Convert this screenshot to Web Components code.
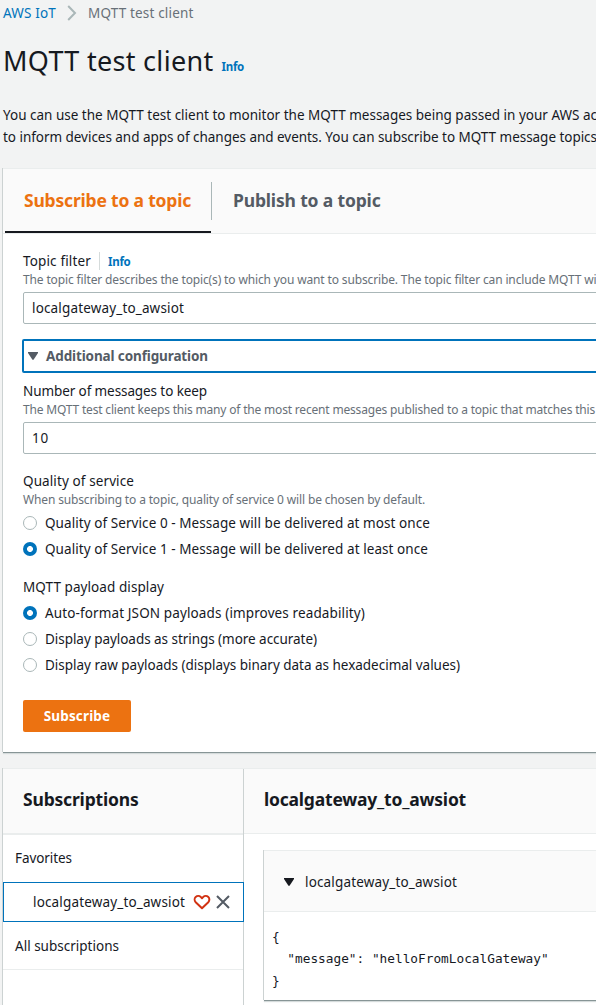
<!DOCTYPE html>
<html lang="en">
<head>
<meta charset="utf-8">
<title>MQTT test client</title>
<style>
html,body{margin:0;height:100%;overflow:hidden;background:#f2f3f3}
body{font:13.5px/22px "Noto Sans","Open Sans",sans-serif;color:#16191f}
</style>
</head>
<body>
<mqtt-page></mqtt-page>
<script>
// Defines an element whose shadow root is cloned from a template.
function define(name, html, setup) {
  const tpl = document.createElement('template');
  tpl.innerHTML = html;
  customElements.define(name, class extends HTMLElement {
    connectedCallback() {
      if (this.shadowRoot) return;
      this.attachShadow({mode: 'open'}).appendChild(tpl.content.cloneNode(true));
      if (setup) setup.call(this, this.shadowRoot);
    }
  });
}

// A single line of text tracked to a given measure: w = width in px.
define('ui-text', `<style>:host{display:block;white-space:pre;flex:none}span{display:inline-block}</style><span><slot></slot></span>`,
function (root) {
  const s = root.querySelector('span');
  const w = parseFloat(this.getAttribute('w'));
  if (!w) return;
  const n = this.textContent.length;
  s.style.letterSpacing = ((w - s.getBoundingClientRect().width) / n) + 'px';
});

define('ui-caret', `<style>:host{display:block;flex:none;width:10px;height:8px}svg{display:block}</style>
<svg width="10" height="8"><path d="M0 0h10v1L5.700 7.600Q5 8.300 4.300 7.600L0 1Z" fill="currentColor"/></svg>`);

define('ui-info', `<style>:host{display:block;color:#0073bb;font-weight:700;font-size:11.5px}</style><ui-text w="22.5">Info</ui-text>`);

define('ui-crumbs', `<style>:host{display:flex;align-items:center;height:22px;padding:2px 0 0 3px;color:#687078}
a{color:#0073bb}svg{margin:0 11px 0 11px;flex:none}</style>
<a><ui-text w="53">AWS IoT</ui-text></a>
<svg width="10" height="16" fill="none" stroke="#aab7b8" stroke-width="2"><path d="M1.200 1 8 8l-6.800 7"/></svg>
<ui-text w="105.500">MQTT test client</ui-text>`);

define('ui-heading', `<style>:host{display:flex;align-items:baseline;padding:19px 0 0 3px;height:62px;box-sizing:border-box}
h1{margin:0;font-size:27px;font-weight:400;line-height:36px}ui-info{margin-left:8px}</style>
<h1><ui-text w="210.500">MQTT test client</ui-text></h1><ui-info></ui-info>`);

define('ui-card', `<style>:host{display:block;background:#fff;margin-left:3px;border-top:1px solid #eaeded;
box-shadow:-1px 0 0 #ccd2d2,0 1px 0 #879596,0 2px 1px #d5dbdb;box-sizing:border-box}</style><slot></slot>`);

define('ui-tabs', `<style>:host{display:flex;height:65px;box-sizing:border-box;background:#fafafa;border-bottom:1px solid #eaeded;font-size:17.5px;font-weight:700;color:#545b64}
div{display:flex;box-sizing:border-box;height:64px;line-height:62px}
.on{margin-left:2px;width:206px;padding-left:19px;color:#ec7211;border-bottom:2px solid #16191f}
i{width:1px;height:38px;margin:13px 21px 0 0;background:#aab7b8}</style>
<div class="on"><ui-text w="167">Subscribe to a topic</ui-text></div><i></i><div><ui-text w="147.500">Publish to a topic</ui-text></div>`);

define('ui-hint', `<style>:host{display:block;color:#687078;font-size:12px;line-height:16px}</style><slot></slot>`);

define('ui-input', `<style>:host{display:flex;box-sizing:border-box;height:32px;width:640px;border:1px solid #aab7b8;border-radius:2px;padding-left:8px;line-height:30px;background:#fff}</style><slot></slot>`);

define('ui-radio', `<style>:host{display:flex;align-items:center;height:26px}
i{box-sizing:border-box;width:14px;height:14px;border:1px solid #aab7b8;border-radius:50%;margin-right:8px;background:#fff;flex:none}
:host([checked]) i{background:radial-gradient(circle,#fff 2.600px,#0073bb 3.300px);border:0}</style><i></i><slot></slot>`);

define('ui-expander', `<style>:host{display:flex;align-items:center;box-sizing:border-box;width:640px;height:34px;margin-left:-1px;padding-left:4px;border:2px solid #0073bb;border-radius:2px;color:#545b64;font-weight:700}
ui-caret{margin-right:8px}</style><ui-caret></ui-caret><slot></slot>`);

define('ui-button', `<style>:host{display:block}button{display:flex;justify-content:center;align-items:center;width:108px;height:32px;padding:0;border:0;border-radius:2px;background:#ec7211;color:#fff;font:inherit;font-weight:700}</style><button><slot></slot></button>`);

define('subscribe-form', `<style>:host{display:block;padding:16px 0 0 20px;height:518px;box-sizing:border-box}
.row{display:flex;height:22px}
.row i{width:1px;height:18px;margin:2px 8px 0 8px;background:#d5dbdb}
.row ui-info{padding-top:1px}
.hint1{margin-bottom:4px}
ui-expander{margin-top:15px;margin-bottom:7px}
.q{margin-top:16px}.hint2{margin-bottom:2px}
.p{margin-top:14px;margin-bottom:2px}
ui-button{margin-top:22px}</style>
<div class="row"><ui-text w="68">Topic filter</ui-text><i></i><ui-info></ui-info></div>
<ui-hint class="hint1"><ui-text w="573.500">The topic filter describes the topic(s) to which you want to subscribe. The topic filter can include MQTT wi</ui-text></ui-hint>
<ui-input><ui-text w="152">localgateway_to_awsiot</ui-text></ui-input>
<ui-expander><ui-text w="162">Additional configuration</ui-text></ui-expander>
<ui-text w="184">Number of messages to keep</ui-text>
<ui-hint class="hint1"><ui-text w="572">The MQTT test client keeps this many of the most recent messages published to a topic that matches this</ui-text></ui-hint>
<ui-input><ui-text w="17">10</ui-text></ui-input>
<ui-text class="q" w="111">Quality of service</ui-text>
<ui-hint class="hint2"><ui-text w="402">When subscribing to a topic, quality of service 0 will be chosen by default.</ui-text></ui-hint>
<ui-radio><ui-text w="385">Quality of Service 0 - Message will be delivered at most once</ui-text></ui-radio>
<ui-radio checked><ui-text w="383">Quality of Service 1 - Message will be delivered at least once</ui-text></ui-radio>
<ui-text class="p" w="141">MQTT payload display</ui-text>
<ui-radio checked><ui-text w="320">Auto-format JSON payloads (improves readability)</ui-text></ui-radio>
<ui-radio><ui-text w="272">Display payloads as strings (more accurate)</ui-text></ui-radio>
<ui-radio><ui-text w="415">Display raw payloads (displays binary data as hexadecimal values)</ui-text></ui-radio>
<ui-button><ui-text w="66.500">Subscribe</ui-text></ui-button>`);

define('ui-panel-title', `<style>:host{display:block;box-sizing:border-box;height:65px;padding-left:20px;background:#fafafa;border-bottom:1px solid #eaeded;font-size:17.5px;font-weight:700;line-height:60px}</style><slot></slot>`);

define('subscription-list', `<style>:host{display:block;width:240px;border-right:1px solid #ccd2d2;flex:none}
.item{display:flex;align-items:center;box-sizing:border-box;padding-left:12px}
.fav{height:48px;padding-bottom:2px;border-top:1px solid #eaeded}
.sel{height:40px;width:241px;margin-right:-1px;padding-left:29px;border:1px solid #0073bb;position:relative}
.all{height:48px;border-bottom:1px solid #eaeded}
svg{flex:none;fill:none}.heart{margin-left:8px}.x{margin-left:5px}</style>
<ui-panel-title><ui-text w="115.500">Subscriptions</ui-text></ui-panel-title>
<div class="item fav"><ui-text w="57">Favorites</ui-text></div>
<div class="item sel"><ui-text w="152">localgateway_to_awsiot</ui-text>
<svg class="heart" width="18" height="16" stroke="#d13212" stroke-width="2" stroke-linejoin="round"><path d="M9 14.200 2.700 8.200C1.300 6.800 1.300 4.300 2.700 2.900 4.200 1.500 6.400 1.600 7.700 2.900L9 4.200l1.300-1.300c1.300-1.300 3.500-1.400 5 0 1.400 1.400 1.400 3.900 0 5.300Z"/></svg>
<svg class="x" width="14" height="14" stroke="#545b64" stroke-width="2"><path d="m1 1 12 12M13 1 1 13"/></svg></div>
<div class="item all"><ui-text w="104">All subscriptions</ui-text></div>`);

define('message-card', `<style>:host{display:block;box-sizing:border-box;margin:16px 0 0 20px;height:150px;border-top:1px solid #eaeded;box-shadow:-1px 0 0 #ccd2d2,0 1px 0 #879596,0 2px 1px #d5dbdb}
header{display:flex;align-items:center;height:61px;box-sizing:border-box;padding:2px 0 0 20px;background:#fafafa;border-bottom:1px solid #eaeded}
ui-caret{margin-right:11px}
pre{margin:0;padding:14px 0 0 8px;font:12.78px/22px "DejaVu Sans Mono",monospace}</style>
<header><ui-caret></ui-caret><ui-text w="152">localgateway_to_awsiot</ui-text></header>
<pre>{
  "message": "helloFromLocalGateway"
}</pre>`);

define('mqtt-page', `<style>:host{display:block;height:1005px;overflow:hidden}
p{margin:0;padding:18px 0 20px 3px}
.form{height:584px}
.subs{display:flex;height:260px;margin-top:16px}
.detail{flex:1;min-width:0}</style>
<ui-crumbs></ui-crumbs>
<ui-heading></ui-heading>
<p><ui-text w="594">You can use the MQTT test client to monitor the MQTT messages being passed in your AWS ac</ui-text><ui-text w="594">to inform devices and apps of changes and events. You can subscribe to MQTT message topics</ui-text></p>
<ui-card class="form"><ui-tabs></ui-tabs><subscribe-form></subscribe-form></ui-card>
<ui-card class="subs"><subscription-list></subscription-list>
<div class="detail"><ui-panel-title><ui-text w="202">localgateway_to_awsiot</ui-text></ui-panel-title><message-card></message-card></div></ui-card>`);
</script>
</body>
</html>
